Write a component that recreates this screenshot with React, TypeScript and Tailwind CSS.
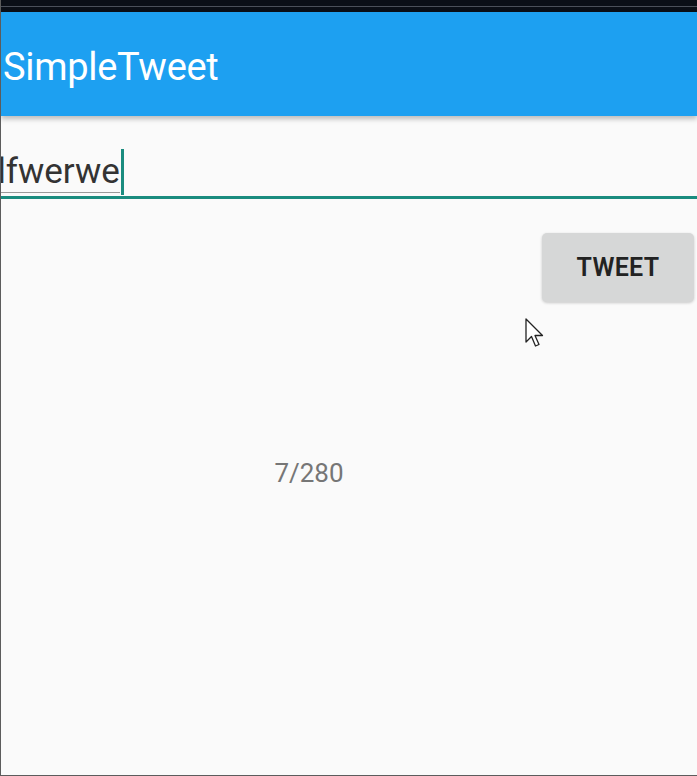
export default function App() {
  return (
    <div
      className="relative flex h-[776px] w-[697px] flex-col overflow-hidden border-b border-l border-[#5c5c5c] bg-[#fafafa]"
      style={{ fontFamily: 'Roboto, "Noto Sans", sans-serif' }}
    >
      {/* window chrome strip */}
      <div className="h-[6px] bg-[#0b0f17]" />
      <div className="h-px bg-[#4b505a]" />
      <div className="h-[5px] bg-[#0b0f17]" />

      {/* toolbar */}
      <div className="relative z-10 flex h-[104px] items-center bg-[#1da0f1] pl-[2px] pt-[6px] shadow-[0_3px_5px_rgba(0,0,0,0.25)]">
        <span className="text-[38px] leading-none tracking-[-0.3px] text-white">SimpleTweet</span>
      </div>

      {/* compose field */}
      <div className="overflow-hidden pt-[22px]">
        <div className="flex h-[58px] items-end pb-[3px]">
          <span className="ml-[-15px] border-b border-[#9a9a9a] text-[35px] leading-[40px] text-[#333333]">
            dfwerwe
          </span>
          <span className="mb-[-2px] ml-[1px] h-[46px] w-[3px] self-end bg-[#1a8c7f]" />
        </div>
        <div className="h-[3px] bg-[#1a8c7f]" />
      </div>

      {/* tweet button */}
      <div className="flex justify-end pr-[3px] pt-[34px]">
        <button className="flex h-[69px] w-[152px] items-center justify-center rounded-[5px] bg-[#d6d7d7] text-[25px] font-semibold tracking-[0.3px] text-[#222222] shadow-[0_1px_3px_rgba(0,0,0,0.2)]">
          TWEET
        </button>
      </div>

      {/* counter */}
      <div className="flex justify-center pr-[80px] pt-[152px]">
        <span className="text-[26px] text-[#767676]">7/280</span>
      </div>

      {/* mouse pointer */}
      <svg
        className="absolute left-[524px] top-[318px]"
        width="20"
        height="30"
        viewBox="0 0 20 30"
      >
        <path
          d="M1 1 L1 24 L6.5 18.5 L10.5 28 L14 26.5 L10 17.5 L17.5 17.5 Z"
          fill="#ffffff"
          stroke="#222222"
          strokeWidth="1.3"
          strokeLinejoin="round"
        />
      </svg>
    </div>
  )
}
